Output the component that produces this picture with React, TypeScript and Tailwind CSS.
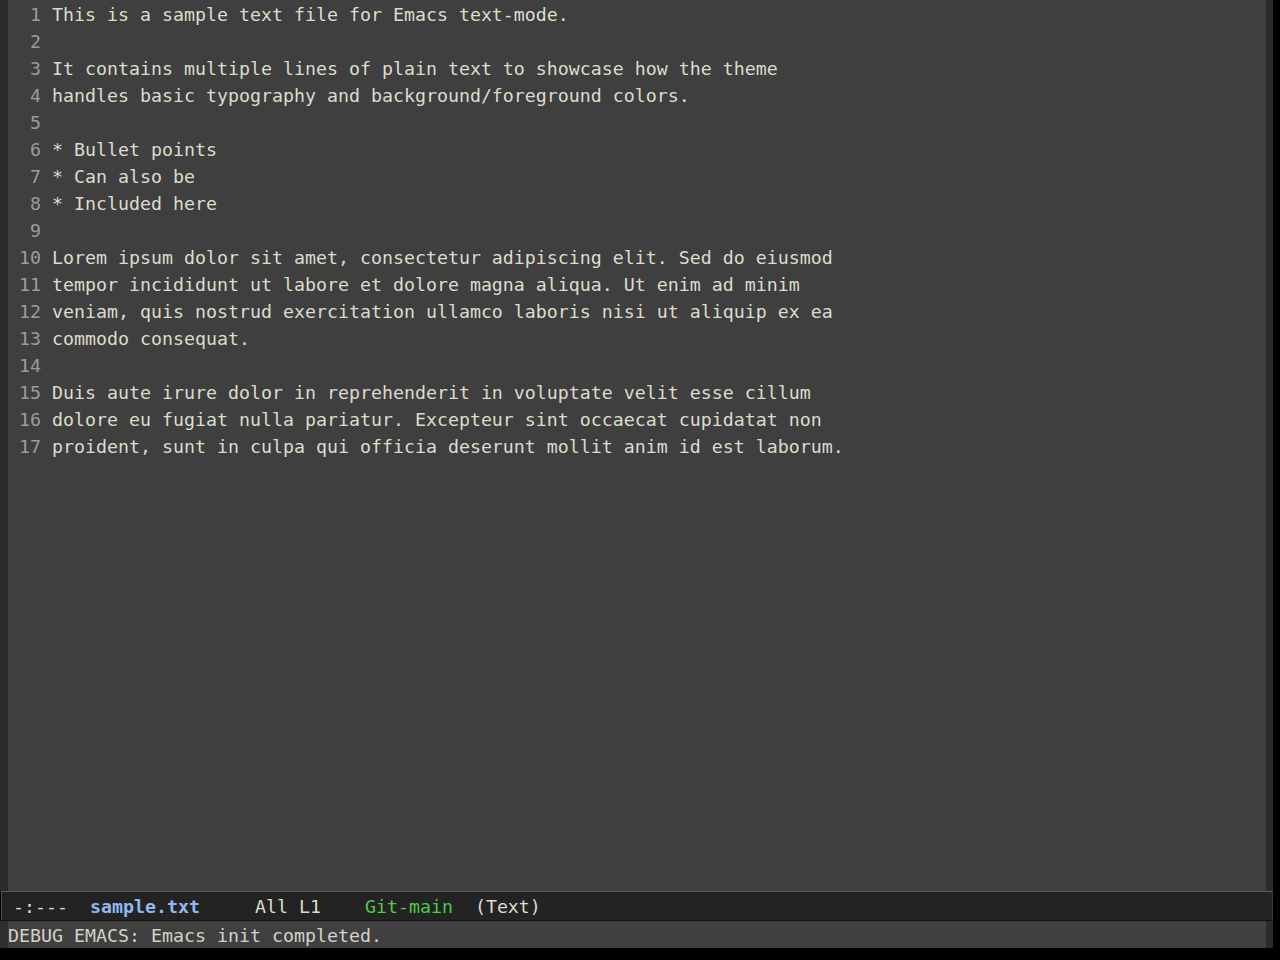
import React from "react";

const lines = [
  "This is a sample text file for Emacs text-mode.",
  "",
  "It contains multiple lines of plain text to showcase how the theme",
  "handles basic typography and background/foreground colors.",
  "",
  "* Bullet points",
  "* Can also be",
  "* Included here",
  "",
  "Lorem ipsum dolor sit amet, consectetur adipiscing elit. Sed do eiusmod",
  "tempor incididunt ut labore et dolore magna aliqua. Ut enim ad minim",
  "veniam, quis nostrud exercitation ullamco laboris nisi ut aliquip ex ea",
  "commodo consequat.",
  "",
  "Duis aute irure dolor in reprehenderit in voluptate velit esse cillum",
  "dolore eu fugiat nulla pariatur. Excepteur sint occaecat cupidatat non",
  "proident, sunt in culpa qui officia deserunt mollit anim id est laborum.",
];

export default function App() {
  return (
    <div
      className="w-[1280px] h-[960px] bg-black flex flex-col overflow-hidden text-[18.27px] whitespace-pre"
      style={{ fontFamily: '"DejaVu Sans Mono", "Liberation Mono", monospace' }}
    >
      {/* editor window */}
      <div className="h-[891px] flex">
        <div className="w-[8px] bg-[#2b2b2b]" />
        <div className="w-[1258px] bg-[#3f3f3f] flex flex-col pt-[1px]">
          {lines.map((l, i) => (
            <div key={i} className="h-[27px] leading-[27px] flex">
              <span className="w-[44px] text-[#9c9c9c] text-right pr-[11px]">{i + 1}</span>
              <span className="text-[#dcdccc]">{l}</span>
            </div>
          ))}
        </div>
        <div className="w-[7px] bg-[#2b2b2b]" />
        <div className="flex-1 bg-black" />
      </div>
      {/* mode line */}
      <div className="h-[30px] flex">
        <div className="w-[1px] bg-black" />
        <div className="w-[1272px] bg-[#232323] border-t border-[#5c5c5c] border-b border-b-[#111111] border-l border-l-[#4a4a4a] border-r border-r-[#3a3a3a] pl-[11px] pt-[2px] leading-[26px] flex">
          <span className="text-[#dcdccc]">{"-:---  "}</span>
          <span className="text-[#8fbaf0] font-bold">sample.txt</span>
          <span className="text-[#dcdccc]">{"     All L1    "}</span>
          <span className="text-[#4fc84f]">Git-main</span>
          <span className="text-[#dcdccc]">{"  (Text)"}</span>
        </div>
        <div className="flex-1 bg-black" />
      </div>
      {/* echo area */}
      <div className="h-[27px] flex">
        <div className="w-[8px] bg-[#2f2f2f]" />
        <div className="w-[1258px] bg-[#404040] leading-[25px] pt-[2px] text-[#d2d2c6]">
          DEBUG EMACS: Emacs init completed.
        </div>
        <div className="w-[7px] bg-[#2b2b2b]" />
        <div className="flex-1 bg-black" />
      </div>
      <div className="flex-1 bg-black" />
    </div>
  );
}
